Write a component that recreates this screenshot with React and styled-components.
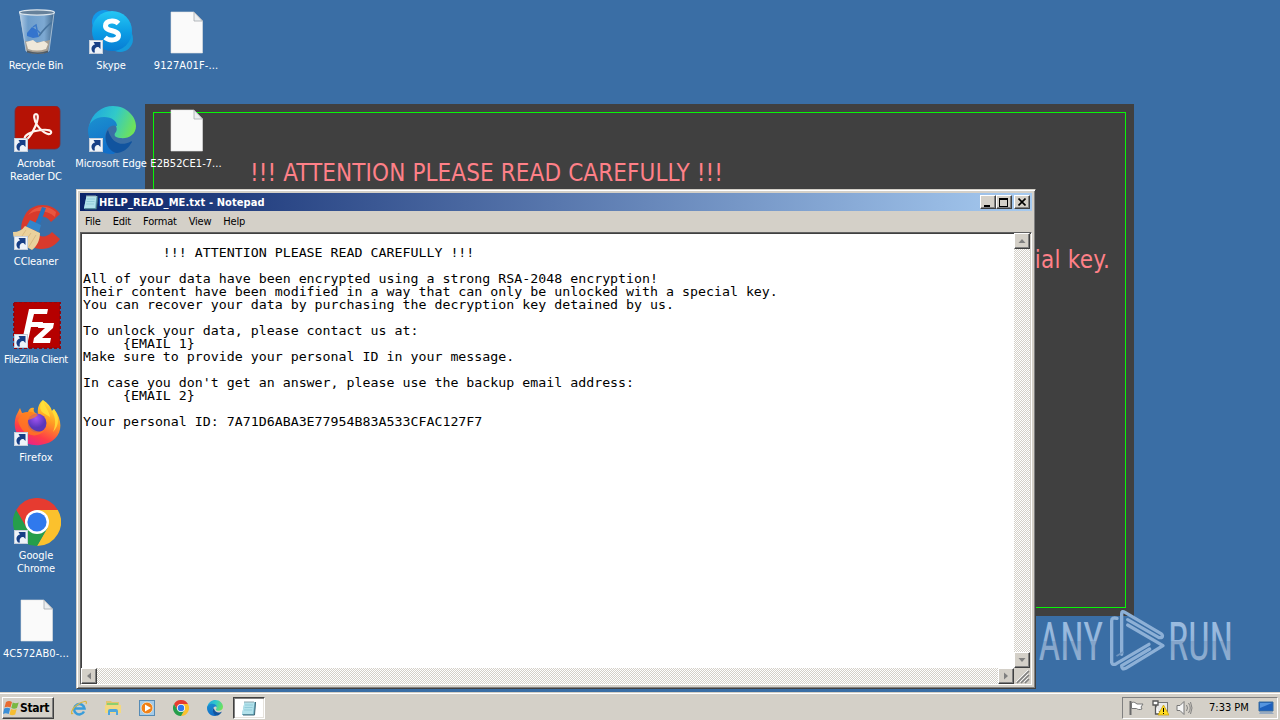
import styled, { createGlobalStyle, css } from 'styled-components';

const GlobalStyle = createGlobalStyle`
  * {
    box-sizing: border-box;
  }

  body {
    margin: 0;
    overflow: hidden;
    font-family: 'DejaVu Sans Condensed', 'DejaVu Sans', sans-serif;
    font-stretch: condensed;
    font-size: 11px;
    color: #000;
  }

  svg {
    display: block;
    flex: none;
  }
`;

const raised = css`
  background: #d4d0c8;
  border: 1px solid;
  border-color: #fff #404040 #404040 #fff;
  box-shadow: inset -1px -1px 0 #808080;
`;

const Screen = styled.div`
  display: flex;
  flex-direction: column;
  width: 1280px;
  height: 720px;
  background: #3a6ea5;
`;

const Desktop = styled.main`
  position: relative;
  flex: 1;
  overflow: hidden;
`;

const Wallpaper = styled.div`
  position: absolute;
  left: 145px;
  top: 104px;
  width: 989px;
  height: 512px;
  padding: 8px;
  background: #404040;
`;

const WallpaperFrame = styled.div`
  display: flex;
  flex-direction: column;
  gap: 59px;
  height: 100%;
  padding: 46px 15px 0 96px;
  border: 1px solid #08f508;
  color: #ff8088;
  font-size: 24px;
  line-height: 28px;
  white-space: nowrap;
`;

const WallpaperLine = styled.div`
  align-self: ${(props) => (props.$end ? 'flex-end' : 'flex-start')};
  letter-spacing: ${(props) => (props.$end ? '0.25px' : '0.1px')};
`;

const Shortcuts = styled.div`
  position: relative;
  display: flex;
  gap: 1px;
`;

const ShortcutColumn = styled.div`
  display: flex;
  flex-direction: column;
  width: 74px;
`;

const ShortcutItem = styled.div`
  display: flex;
  flex-direction: column;
  align-items: center;
  height: 98px;
  padding-top: 8px;
`;

const ShortcutLabel = styled.span`
  max-width: 64px;
  margin: 3px 0 0 -2px;
  color: #fff;
  line-height: 13px;
  text-align: center;
  white-space: ${(props) => (props.$wrap ? 'pre-line' : 'nowrap')};
  display: flex;
  justify-content: center;
  letter-spacing: ${(props) => props.$spacing || '-0.1px'};
`;

const Window = styled.section`
  position: absolute;
  left: 76px;
  top: 189px;
  width: 960px;
  height: 500px;
  display: flex;
  flex-direction: column;
  padding: 3px;
  background: #d4d0c8;
  border: 1px solid;
  border-color: #d4d0c8 #404040 #404040 #d4d0c8;
  box-shadow: inset 1px 1px 0 #fff, inset -1px -1px 0 #808080;
`;

const TitleBar = styled.header`
  display: flex;
  align-items: center;
  height: 18px;
  flex: none;
  padding: 0 2px 0 3px;
  background: linear-gradient(90deg, #0a246a, #a6caf0);
  color: #fff;
  font-weight: bold;
`;

const TitleText = styled.span`
  flex: 1;
  letter-spacing: 0.09px;
`;

const WindowButton = styled.button`
  ${raised}
  display: flex;
  align-items: center;
  justify-content: center;
  width: 16px;
  height: 14px;
  padding: 0;
  margin-left: ${(props) => (props.$gap ? '2px' : '0')};
`;

const MenuBar = styled.nav`
  display: flex;
  align-items: center;
  flex: none;
  height: 21px;
  padding: 0 5px;
  gap: 12px;
`;

const MenuItem = styled.span`
  letter-spacing: -0.2px;
`;

const Editor = styled.div`
  display: grid;
  grid-template-columns: 1fr 16px;
  grid-template-rows: 1fr 16px;
  flex: 1;
  min-height: 0;
  padding-right: 1px;
  border: 1px solid;
  border-color: #606060 #fff #fff #606060;
  box-shadow: inset 1px 1px 0 #404040;
`;

const NotePane = styled.div`
  margin: 1px 0 0 1px;
  padding: 13px 0 0 1px;
  background: #fff;
`;

/* Lucida Console is wide and low, so the taller mono face is pressed down */
const Note = styled.pre`
  margin: 0;
  font-family: 'DejaVu Sans Mono', 'Liberation Mono', monospace;
  font-size: 13.27px;
  line-height: 14.4444px;
  transform: scaleY(0.9);
  transform-origin: 0 0;
`;

const ScrollTrack = styled.div`
  display: flex;
  flex-direction: ${(props) => (props.$vertical ? 'column' : 'row')};
  justify-content: space-between;
  background: repeating-conic-gradient(#fff 0 25%, #d4d0c8 0 50%) 0 0 / 2px 2px;
`;

const ScrollButton = styled.button`
  ${raised}
  display: flex;
  align-items: center;
  justify-content: center;
  width: 16px;
  height: 16px;
  padding: 0;
`;

const Grip = styled.div`
  background: #d4d0c8;
`;

const Watermark = styled.div`
  position: absolute;
  left: 1036px;
  top: 606px;
`;

const Taskbar = styled.footer`
  display: flex;
  align-items: center;
  height: 28px;
  padding: 2px 2px 0 2px;
  background: #d4d0c8;
  border-top: 1px solid #d4d0c8;
  box-shadow: inset 0 1px 0 #fff;
`;

const StartButton = styled.button`
  ${raised}
  display: flex;
  align-items: center;
  width: 52px;
  height: 22px;
  padding: 0;
  font: bold 12px 'DejaVu Sans Condensed', 'DejaVu Sans', sans-serif;
  letter-spacing: -0.3px;
`;

const QuickLaunch = styled.div`
  display: flex;
  align-items: center;
  gap: 18px;
  margin-left: 17px;
`;

const TaskButton = styled.div`
  display: flex;
  align-items: center;
  justify-content: center;
  width: 32px;
  height: 22px;
  margin-left: 10px;
  background: #fff;
  border: 1px solid;
  border-color: #404040 #fff #fff #404040;
  box-shadow: inset 1px 1px 0 #808080, inset -1px -1px 0 #e6e3dd;
`;

const Tray = styled.div`
  display: flex;
  align-items: center;
  width: 156px;
  height: 22px;
  margin-left: auto;
  padding: 0 1px 0 5px;
  gap: 7px;
  border: 1px solid;
  border-color: #808080 #fff #fff #808080;
`;

const Clock = styled.span`
  margin: 0 2px 0 9px;
  width: 40px;
  white-space: nowrap;
`;

const ShortcutArrow = () => (
  <g>
    <rect x="1.500" y="32.500" width="13" height="13" fill="#eef3f9" stroke="#c6cfdb" />
    <path d="M5 44.500c-3-4-1-7.500 2-8L5.500 34H12.500v7l-2-2c-3 0-4.500 2-3.500 5.500z" fill="#173f86" />
  </g>
);

const BinIcon = () => (
  <svg width="48" height="48" viewBox="0 0 48 48">
    <defs>
      <linearGradient id="bin" x1="0" x2="1">
        <stop offset="0" stopColor="#b9d0e6" />
        <stop offset=".25" stopColor="#6d9dcb" />
        <stop offset=".7" stopColor="#7da9d2" />
        <stop offset="1" stopColor="#3e6488" />
      </linearGradient>
    </defs>
    <path d="M6 3 42 4 36 43q-12 5-23 0z" fill="url(#bin)" />
    <path d="m12 33 1 10q10 4 22 0l2-11q-13 4-25 1z" fill="#a59e93" />
    <path d="m13 34 7-2 4 3 7-2 4 3-2 5q-9 3-18 0z" fill="#efe8da" />
    <path d="m14 25 5-6 5 3 2 7-6 1-6-2z" fill="#3474cd" />
    <path d="m20 19 3-2 1 5 4 4" stroke="#3a78c8" strokeWidth="1.500" fill="none" />
    <path d="M26 28q7-10 15-15" stroke="#49759f" strokeWidth="1.500" fill="none" />
    <path d="m7 5 6 38q12 5 23 0l5-38" fill="none" stroke="#b6cce0" strokeWidth=".8" />
    <path d="M14 42.500q11 4 21 0v2q-10 3-21 0z" fill="#535c64" />
    <ellipse cx="24" cy="4.500" rx="17.500" ry="2.700" fill="#66819b" stroke="#dce6ee" strokeWidth="1.200" />
  </svg>
);

const SkypeIcon = () => (
  <svg width="48" height="48" viewBox="0 0 48 48">
    <defs>
      <linearGradient id="skype" x1="0" x2="0" y1="0" y2="1">
        <stop offset="0" stopColor="#25c7f4" />
        <stop offset=".55" stopColor="#0b9be4" />
        <stop offset="1" stopColor="#087bd2" />
      </linearGradient>
    </defs>
    <circle cx="16" cy="14" r="12" fill="#1499e8" />
    <circle cx="32" cy="31" r="13" fill="#149bdc" />
    <circle cx="24" cy="23" r="20" fill="url(#skype)" />
    <path d="M30.500 15.500q-3-3-7-2.500-6 .5-6 5c0 6 13 3.500 13 9.500 0 5-9 6-13.500 2" fill="none" stroke="#fff" strokeWidth="5" />
    <ShortcutArrow />
  </svg>
);

const DocIcon = () => (
  <svg width="48" height="48" viewBox="0 0 48 48">
    <path d="M8 4h23l8.500 9v32H8z" fill="#fafafa" stroke="#e2e2e2" strokeWidth=".6" />
    <path d="M31 4v9h8.500z" fill="#eceef0" stroke="#a4a8ad" strokeWidth=".8" />
  </svg>
);

const AcrobatIcon = () => (
  <svg width="48" height="48" viewBox="0 0 48 48">
    <rect x="2" y="0" width="45" height="43" rx="5" fill="#b51205" stroke="#7f2b35" strokeWidth=".8" />
    <path
      d="M12 33c-2-3 6-8 16-9 8-1 11 1 10 3-2 4-11-3-14-8-3-5-4-11-1-11s2 7-1 13c-3 7-8 14-10 12z"
      fill="none"
      stroke="#fff5ef"
      strokeWidth="2.200"
    />
    <ShortcutArrow />
  </svg>
);

const EdgeIcon = ({ size = 48, shortcut }) => (
  <svg width={size} height={size} viewBox="0 0 48 48">
    <defs>
      <linearGradient id="edgeTop" x1="0" y1=".3" x2="1" y2=".6">
        <stop offset="0" stopColor="#1fa7df" />
        <stop offset=".5" stopColor="#31c9c9" />
        <stop offset="1" stopColor="#71e356" />
      </linearGradient>
      <linearGradient id="edgeLeft" x1="0" y1="0" x2=".3" y2="1">
        <stop offset="0" stopColor="#1b91cf" />
        <stop offset="1" stopColor="#126fc9" />
      </linearGradient>
    </defs>
    <path d="M1 20C4 7 14 0 25 0c14 0 23 11 23 20 0 9-8 13-16 12-5-.5-7-3-4-6 3-5-3-12-11-12-8 0-13 3-16 10z" fill="url(#edgeTop)" />
    <path d="M0 24c0-7 7-13 16-13 8 0 13 4 13 9-3-1-7-1-10 4-4 7 0 16 10 19l-3 5C11 49 0 38 0 24z" fill="url(#edgeLeft)" />
    <path d="M20 24c-6 8 0 22 9 23 8-1 12-6 15-11 0-1-1-1-2 0-8 4-18 2-22-12z" fill="#11549f" />
    {shortcut && <ShortcutArrow />}
  </svg>
);

const CCleanerIcon = () => (
  <svg width="48" height="48" viewBox="0 0 48 48">
    <path d="M47 10C39-2 19-2 12 11 2 28 13 45 28 45c9 0 15-4 19-10l-8-7c-6 7-17 6-17-5s10-14 16-5z" fill="#d83a2c" />
    <path d="M43 8C34 0 22 1 15 11c8-6 19-5 27 2z" fill="#ef6249" opacity=".7" />
    <path d="m29 3 4 1-7 19-4-2z" fill="#2773bd" />
    <path d="m17 16 11 5-2 7-13-5z" fill="#3185cc" />
    <path d="m12 22 15 7c0 7-3 13-8 17L3 37q-3-3-3-9 8 0 12-6z" fill="#ead19c" />
    <path d="M13 26 5 38m13-9-9 13m14-11-8 13" stroke="#d3b47c" strokeWidth=".8" />
    <ShortcutArrow />
  </svg>
);

const FileZillaIcon = () => (
  <svg width="48" height="48" viewBox="0 0 48 48">
    <rect x="1" y="0" width="46" height="46" fill="#b50000" stroke="#8f0710" strokeWidth="2" strokeDasharray="3 2" />
    <path d="M9 39 16 7h19l-1 5H21l-2 8h11l-1 5H18l-3 14zM26 21h15l-1 5-11 10h9l-1 5H20l1-5 11-10h-7z" fill="#fff" />
    <ShortcutArrow />
  </svg>
);

const FirefoxIcon = () => (
  <svg width="48" height="48" viewBox="0 0 48 48">
    <defs>
      <linearGradient id="fox" x1=".8" y1="0" x2=".3" y2="1">
        <stop offset="0" stopColor="#fff03d" />
        <stop offset=".4" stopColor="#ff9b23" />
        <stop offset=".75" stopColor="#ff3d47" />
        <stop offset="1" stopColor="#e8208d" />
      </linearGradient>
      <radialGradient id="globe" cx=".45" cy=".25">
        <stop offset="0" stopColor="#a253f3" />
        <stop offset="1" stopColor="#5936ba" />
      </radialGradient>
    </defs>
    <path d="M30 0c5 3 8 7 9 11l2-2c12 15 7 34-14 36C8 47-2 31 3 16l4-8 2 5 6-1c1-3 3-5 6-4-1 3 0 5 4 6-1-6 1-11 5-14z" fill="url(#fox)" />
    <circle cx="24" cy="23" r="9.500" fill="url(#globe)" />
    <path d="M9 14c6-4 12-2 16 1-3 3-7 4-10 5 0 9 9 14 17 10-9 11-25 4-27-10z" fill="#ff7c1d" opacity=".75" />
    <path d="M30 0c5 3 8 7 9 11 4 7 4 14 1 21 7-7 6-16 1-23l-2 2c-1-4-4-8-9-11-4 6-4 11 2 14l5 3C36 10 31 6 30 0z" fill="#ffe33b" opacity=".8" />
    <ShortcutArrow />
  </svg>
);

const ChromeIcon = ({ size = 48, shortcut }) => (
  <svg width={size} height={size} viewBox="0 0 48 48">
    <path d="M3.200 12A24 24 0 0 1 44.800 12H24L13.600 30z" fill="#e63b30" />
    <path d="M44.800 12A24 24 0 0 1 24 48l10.400-18L24 12z" fill="#fbc12d" />
    <path d="M24 48A24 24 0 0 1 3.200 12l10.400 18L34.400 30z" fill="#259e4b" />
    <circle cx="24" cy="24" r="12" fill="#fff" />
    <circle cx="24" cy="24" r="9.600" fill="#3079ed" />
    {shortcut && <ShortcutArrow />}
  </svg>
);

const NotepadIcon = () => (
  <svg width="16" height="16" viewBox="0 0 16 16">
    <path d="M3.500 2H15l-1.500 13H1z" fill="#70b5c8" />
    <path d="M3.500 2h10l-1.500 12H1z" fill="#b3e2eb" />
    <path d="M4 5h8M3.500 7.500h8M3 10h8" stroke="#84c3d2" strokeWidth=".7" />
    <path d="M4 1v2m2-2v2m2-2v2m2-2v2m2-2v2" stroke="#8fa7ae" />
    <path d="m14.500 2-1 13H2" stroke="#416776" fill="none" />
  </svg>
);

const WindowsFlag = () => (
  <svg width="17" height="16" viewBox="0 0 17 16">
    <path d="M3 2q3-2 6 0L7.500 7.500Q4.500 6 1.500 7.500z" fill="#e86b31" />
    <path d="M9.700 2.500q3 1.500 6 0L14 8q-3 1.500-5.700 0z" fill="#79b842" />
    <path d="M1.200 8.500q3-1.500 6 0L5.700 14q-3-1.500-5.700 0z" fill="#3b8fd7" />
    <path d="M8 9q3 1.500 5.700 0l-1.500 5.500q-3 1.500-5.700 0z" fill="#f5bd32" />
  </svg>
);

const ExplorerIcon = () => (
  <svg width="16" height="16" viewBox="0 0 16 16">
    <path d="M13 11.500A5.200 5.200 0 1 1 13.500 8.500H4" fill="none" stroke="#3a9dda" strokeWidth="2.500" />
    <path d="M2 13c-3 3-2-4 4-8s11-5 9-1" fill="none" stroke="#d8b644" strokeWidth="1.200" />
  </svg>
);

const FolderIcon = () => (
  <svg width="16" height="16" viewBox="0 0 16 16">
    <path d="M1 1h5l1 1h7v8H1z" fill="#e2c56d" />
    <path d="M2 3h11v2H2z" fill="#8dcf6f" />
    <path d="M0 5h16v8H0z" fill="#f3d981" />
    <path d="M3 15v-4q0-2 2-2h6q2 0 2 2v4h-2v-3H5v3z" fill="#4ea6dc" />
  </svg>
);

const PlayerIcon = () => (
  <svg width="16" height="16" viewBox="0 0 16 16">
    <rect x=".5" y=".5" width="15" height="15" fill="#a5cbe8" stroke="#568bb5" />
    <circle cx="8" cy="8" r="5.800" fill="#f18117" stroke="#fff1d9" strokeWidth=".6" />
    <path d="m6 4.500 6 3.500-6 3.500z" fill="#fff" />
  </svg>
);

const FlagIcon = () => (
  <svg width="17" height="16" viewBox="0 0 17 16">
    <path d="M2.500 1v14" stroke="#6a6a6a" strokeWidth="2" />
    <path d="M3.500 2.500c3-1 4 .5 5.500 1.500h6l-2 3 1 2c-3 1-4 .5-5.500-.5h-5z" fill="#fff" stroke="#777" />
  </svg>
);

const NetworkIcon = () => (
  <svg width="17" height="16" viewBox="0 0 17 16">
    <rect x="4.500" y="2.500" width="11" height="9" fill="#e9e9e9" stroke="#777" />
    <path d="M1 1h5v4H1zM3.500 5v9H8" fill="#fff" stroke="#555" strokeWidth="1.300" />
    <path d="m11.500 5 5.500 10H6z" fill="#ffdb21" stroke="#c39a00" strokeWidth=".7" />
    <path d="M11.500 8v4m0 1v1" stroke="#000" />
  </svg>
);

const SoundIcon = () => (
  <svg width="17" height="16" viewBox="0 0 17 16">
    <path d="M1 5.500h3l4-4v13l-4-4H1z" fill="#f6f6f6" stroke="#777" />
    <path d="M10.500 5q2 3 0 6M12.500 3q3.500 5 0 10M14.500 2q3 6 0 12" fill="none" stroke="#777" strokeWidth=".9" />
  </svg>
);

const MonitorIcon = () => (
  <svg width="17" height="16" viewBox="0 0 17 16">
    <path d="M1 2h14v9H1z" fill="#1d60bd" stroke="#386c9f" />
    <path d="M2 3h12L2 8z" fill="#5594df" />
    <path d="M2 12h12l2 2H1z" fill="#96aac1" />
  </svg>
);

const Arrow = ({ dir }) => (
  <svg width="8" height="8" viewBox="0 0 8 8" transform={`rotate(${dir})`}>
    <path d="M4 2 7.500 6H.5z" fill="#808080" />
  </svg>
);

const AnyRunLogo = () => (
  <svg width="244" height="80" viewBox="0 0 244 80" fontFamily="Roboto, sans-serif" fontSize="53">
    <defs>
      <linearGradient id="mark" x1="0" x2="0" y1="16" y2="54" gradientUnits="userSpaceOnUse">
        <stop offset="0" stopColor="#9bbce0" />
        <stop offset=".5" stopColor="#94b5da" />
        <stop offset=".51" stopColor="#84a4c9" />
        <stop offset="1" stopColor="#8eaed1" />
      </linearGradient>
    </defs>
    <text x="2.500" y="54" textLength="64.500" lengthAdjust="spacingAndGlyphs" fill="url(#mark)">ANY</text>
    <text x="132" y="54" textLength="65" lengthAdjust="spacingAndGlyphs" fill="url(#mark)">RUN</text>
    <g transform="translate(59 -1) scale(.3333)" fill="none" stroke="#8db0d6" strokeWidth="10" strokeLinejoin="round" strokeLinecap="round">
      <path d="M80 148V26Q80 16 90 22L198 86Q206 92 200 98L192 98L98 44" />
      <path d="M66 40Q50 36 50 48V172Q52 182 64 176L162 118" />
      <path d="M98 60L204 122L92 190Q80 196 80 182L164 132" />
      <path d="M66 152L84 142" stroke="#6f95bf" strokeWidth="5" />
    </g>
  </svg>
);

const columns = [
  [
    { label: 'Recycle Bin', icon: <BinIcon />, spacing: '-0.25px' },
    { label: 'Acrobat\nReader DC', icon: <AcrobatIcon />, wrap: true },
    { label: 'CCleaner', icon: <CCleanerIcon /> },
    { label: 'FileZilla Client', icon: <FileZillaIcon />, spacing: '-0.35px' },
    { label: 'Firefox', icon: <FirefoxIcon />, spacing: '0.15px' },
    { label: 'Google\nChrome', icon: <ChromeIcon shortcut />, wrap: true },
    { label: '4C572AB0-...', icon: <DocIcon />, spacing: '0.1px' },
  ],
  [
    { label: 'Skype', icon: <SkypeIcon /> },
    { label: 'Microsoft Edge', icon: <EdgeIcon shortcut /> },
  ],
  [
    { label: '9127A01F-...', icon: <DocIcon />, spacing: '0.1px' },
    { label: 'E2B52CE1-7...', icon: <DocIcon />, spacing: '0.05px' },
  ],
];

const noteText = `          !!! ATTENTION PLEASE READ CAREFULLY !!!

All of your data have been encrypted using a strong RSA-2048 encryption!
Their content have been modified in a way that can only be unlocked with a special key.
You can recover your data by purchasing the decryption key detained by us.

To unlock your data, please contact us at:
     {EMAIL 1}
Make sure to provide your personal ID in your message.

In case you don't get an answer, please use the backup email address:
     {EMAIL 2}

Your personal ID: 7A71D6ABA3E77954B83A533CFAC127F7`;

const App = () => (
  <>
    <GlobalStyle />
    <Screen>
      <Desktop>
        <Wallpaper>
          <WallpaperFrame>
            <WallpaperLine>!!! ATTENTION PLEASE READ CAREFULLY !!!</WallpaperLine>
            <WallpaperLine $end>special key.</WallpaperLine>
          </WallpaperFrame>
        </Wallpaper>
        <Shortcuts>
          {columns.map((items, i) => (
            <ShortcutColumn key={i}>
              {items.map((item) => (
                <ShortcutItem key={item.label}>
                  {item.icon}
                  <ShortcutLabel $wrap={item.wrap} $spacing={item.spacing}>
                    {item.label}
                  </ShortcutLabel>
                </ShortcutItem>
              ))}
            </ShortcutColumn>
          ))}
        </Shortcuts>
        <Watermark>
          <AnyRunLogo />
        </Watermark>
        <Window>
          <TitleBar>
            <NotepadIcon />
            <TitleText>HELP_READ_ME.txt - Notepad</TitleText>
            <WindowButton aria-label="Minimize">
              <svg width="10" height="9"><path d="M1 7h6v2H1z" /></svg>
            </WindowButton>
            <WindowButton aria-label="Maximize">
              <svg width="10" height="9"><path d="M0 0h9v9H0zM1 2v6h7V2z" fillRule="evenodd" /></svg>
            </WindowButton>
            <WindowButton $gap aria-label="Close">
              <svg width="8" height="8"><path d="m.5.500 7 7m0-7-7 7" stroke="#000" strokeWidth="1.600" /></svg>
            </WindowButton>
          </TitleBar>
          <MenuBar>
            {['File', 'Edit', 'Format', 'View', 'Help'].map((name) => (
              <MenuItem key={name}>{name}</MenuItem>
            ))}
          </MenuBar>
          <Editor>
            <NotePane>
              <Note>{noteText}</Note>
            </NotePane>
            <ScrollTrack $vertical>
              <ScrollButton aria-label="Up"><Arrow dir={0} /></ScrollButton>
              <ScrollButton aria-label="Down"><Arrow dir={180} /></ScrollButton>
            </ScrollTrack>
            <ScrollTrack>
              <ScrollButton aria-label="Left"><Arrow dir={-90} /></ScrollButton>
              <ScrollButton aria-label="Right"><Arrow dir={90} /></ScrollButton>
            </ScrollTrack>
            <Grip>
              <svg width="16" height="16">
                <path d="M3 15 15 3M7 15l8-8M11 15l4-4" stroke="#808080" strokeWidth="1.600" />
                <path d="M2 14 14 2M6 14l8-8M10 14l4-4" stroke="#fff" strokeWidth=".8" />
              </svg>
            </Grip>
          </Editor>
        </Window>
      </Desktop>
      <Taskbar>
        <StartButton>
          <WindowsFlag />
          Start
        </StartButton>
        <QuickLaunch>
          <ExplorerIcon />
          <FolderIcon />
          <PlayerIcon />
          <ChromeIcon size={16} />
          <EdgeIcon size={16} />
        </QuickLaunch>
        <TaskButton>
          <NotepadIcon />
        </TaskButton>
        <Tray>
          <FlagIcon />
          <NetworkIcon />
          <SoundIcon />
          <Clock>7:33 PM</Clock>
          <MonitorIcon />
        </Tray>
      </Taskbar>
    </Screen>
  </>
);

export default App;
